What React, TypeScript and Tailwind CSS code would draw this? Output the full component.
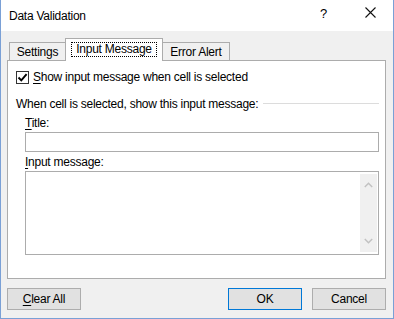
import React from "react";

function Tab({ label, active, width }: { label: string; active?: boolean; width: string }) {
  if (active) {
    return (
      <div
        className={`relative z-10 -ml-px mb-[-1px] flex h-[23px] ${width} items-start justify-center border border-b-0 border-[#acacac] bg-white pt-[3px]`}
      >
        <span className="border border-dotted border-black px-[4px] leading-[13px]">{label}</span>
      </div>
    );
  }
  return (
    <div
      className={`-ml-px flex h-[18px] ${width} items-center justify-center border border-b-0 border-[#acacac] bg-[#f0f0f0] leading-4 first:ml-0`}
    >
      {label}
    </div>
  );
}

function Button({ children, primary }: { children: React.ReactNode; primary?: boolean }) {
  return (
    <button
      className={`flex h-[22px] w-[74px] items-center justify-center border bg-[#e1e1e1] leading-4 text-black ${
        primary ? "border-[#0078d7]" : "border-[#adadad]"
      }`}
    >
      {children}
    </button>
  );
}

export default function App() {
  return (
    <div className="flex h-[319px] w-[394px] flex-col border-x border-b border-[#7aa0d6] bg-[#f0f0f0] font-['Liberation_Sans',Arial,sans-serif] text-[12px] tracking-[-0.25px] text-black">
      {/* title bar */}
      <div className="flex h-[31px] shrink-0 items-center bg-white pl-[8px]">
        <span className="leading-4">Data Validation</span>
        <span className="ml-auto mr-[38px] mt-[-4px] text-[13px] leading-4">?</span>
        <svg className="mb-[6px] mr-[17px]" width="11" height="11" viewBox="0 0 11 11">
          <path d="M0.5 0.5 L10.5 10.5 M10.5 0.5 L0.5 10.5" stroke="#111" strokeWidth="1.1" />
        </svg>
      </div>

      <div className="flex flex-col pl-[6px] pr-[7px] pt-[7px]">
        {/* tabs */}
        <div className="flex h-[22px] items-end pl-[2px]">
          <Tab label="Settings" width="w-[57px]" />
          <Tab label="Input Message" width="w-[98px]" active />
          <Tab label="Error Alert" width="w-[68px]" />
        </div>

        {/* panel */}
        <div className="h-[219px] border border-[#acacac] bg-white pl-[8px] pr-[6px]">
          <div className="mt-[8px] flex h-4 items-center">
            <span className="flex h-[13px] w-[13px] items-center justify-center border border-[#333] bg-white">
              <svg width="11" height="11" viewBox="0 0 11 11">
                <path d="M1.5 5.5 L4.3 8.3 L9.6 2.2" fill="none" stroke="#000" strokeWidth="1.9" />
              </svg>
            </span>
            <span className="ml-[4px] leading-4">
              <u className="underline-offset-2">S</u>how input message when cell is selected
            </span>
          </div>

          <div className="mt-[11px] flex h-4 items-center">
            <span className="leading-4">When cell is selected, show this input message:</span>
            <div className="ml-[5px] mt-[-1px] h-px flex-1 bg-[#dcdcdc]" />
          </div>

          <div className="ml-[9px] mt-[3px] leading-4">
            <u className="underline-offset-2">T</u>itle:
          </div>
          <div className="ml-[9px] mt-[1px] h-[20px] w-[354px] border border-[#acacac] bg-white" />

          <div className="ml-[9px] mt-[2px] leading-4">
            <u className="underline-offset-2">I</u>nput message:
          </div>
          <div className="ml-[9px] mt-[1px] flex h-[84px] w-[354px] justify-end border border-[#acacac] bg-white pb-[2px] pr-[1px] pt-[2px]">
            <div className="flex w-[17px] flex-col items-center justify-between bg-[#f0f0f0] py-[8px]">
              <svg width="9" height="6" viewBox="0 0 9 6">
                <path d="M0.8 5 L4.5 1.3 L8.2 5" fill="none" stroke="#c2c2c2" strokeWidth="1.5" />
              </svg>
              <svg width="9" height="6" viewBox="0 0 9 6">
                <path d="M0.8 1 L4.5 4.7 L8.2 1" fill="none" stroke="#c2c2c2" strokeWidth="1.5" />
              </svg>
            </div>
          </div>
        </div>

        {/* buttons */}
        <div className="mt-[9px] flex items-center">
          <Button>
            <span>
              <u className="underline-offset-2">C</u>lear All
            </span>
          </Button>
          <div className="ml-auto flex gap-[10px]">
            <Button primary>OK</Button>
            <Button>Cancel</Button>
          </div>
        </div>
      </div>
    </div>
  );
}
